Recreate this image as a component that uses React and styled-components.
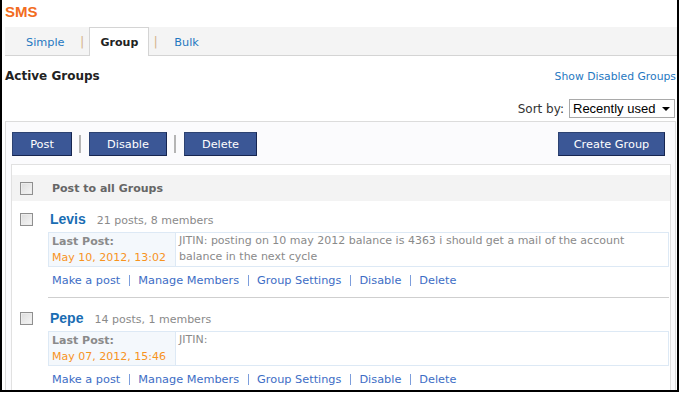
import React from "react";
import styled, { createGlobalStyle } from "styled-components";

const GlobalStyle = createGlobalStyle`
  html, body {
    margin: 0;
    padding: 0;
    background: #ffffff;
  }
  body {
    font-family: "DejaVu Sans", Verdana, sans-serif;
    font-size: 11px;
    color: #333;
  }
`;

const groups = [
  {
    name: "Levis",
    meta: "21 posts, 8 members",
    date: "May 10, 2012, 13:02",
    message:
      "JITIN: posting on 10 may 2012 balance is 4363 i should get a mail of the account balance in the next cycle",
  },
  {
    name: "Pepe",
    meta: "14 posts, 1 members",
    date: "May 07, 2012, 15:46",
    message: "JITIN:",
  },
];

const links = ["Make a post", "Manage Members", "Group Settings", "Disable", "Delete"];

export default function App() {
  return (
    <>
      <GlobalStyle />
      <Frame>
        <Brand>SMS</Brand>
        <TabBar>
          <Tab>Simple</Tab>
          <TabSep>|</TabSep>
          <Tab $active>Group</Tab>
          <TabSep>|</TabSep>
          <Tab>Bulk</Tab>
        </TabBar>

        <TitleRow>
          <Title>Active Groups</Title>
          <TopLink>Show Disabled Groups</TopLink>
        </TitleRow>

        <SortRow>
          <SortLabel>Sort by:</SortLabel>
          <Select>
            <span>Recently used</span>
            <Caret />
          </Select>
        </SortRow>

        <Panel>
          <Toolbar>
            <ButtonGroup>
              <Button $w={60}>Post</Button>
              <BtnSep />
              <Button $w={78}>Disable</Button>
              <BtnSep />
              <Button $w={73}>Delete</Button>
            </ButtonGroup>
            <Button $w={107}>Create Group</Button>
          </Toolbar>

          <ListBox>
            <ListHeader>
              <Check />
              <HeaderLabel>Post to all Groups</HeaderLabel>
            </ListHeader>

            {groups.map((g) => (
              <Item key={g.name}>
                <Check />
                <ItemBody>
                  <NameRow>
                    <GroupName>{g.name}</GroupName>
                    <Meta>{g.meta}</Meta>
                  </NameRow>
                  <LastPost>
                    <LastPostInfo>
                      <LastLabel>Last Post:</LastLabel>
                      <LastDate>{g.date}</LastDate>
                    </LastPostInfo>
                    <Message>{g.message}</Message>
                  </LastPost>
                  <Actions>
                    {links.map((l, i) => (
                      <React.Fragment key={l}>
                        {i > 0 && <ActionSep />}
                        <ActionLink>{l}</ActionLink>
                      </React.Fragment>
                    ))}
                  </Actions>
                </ItemBody>
              </Item>
            ))}
          </ListBox>
        </Panel>
      </Frame>
    </>
  );
}

const Frame = styled.div`
  width: 679px;
  height: 392px;
  box-sizing: border-box;
  border-left: 2px solid #000;
  border-right: 2px solid #000;
  border-bottom: 2px solid #000;
  padding-left: 3px;
  overflow: hidden;
`;

const Brand = styled.div`
  height: 27px;
  padding-top: 3px;
  box-sizing: border-box;
  font-family: "Liberation Sans", Arial, sans-serif;
  font-size: 15px;
  font-weight: bold;
  color: #f26c21;
  line-height: 17px;
`;

const TabBar = styled.div`
  display: flex;
  align-items: stretch;
  height: 28px;
  padding-left: 9px;
  background: #f4f4f4;
  border-bottom: 1px solid #d4d4d4;
`;

const Tab = styled.div`
  display: flex;
  align-items: center;
  padding: 0 10px 0 11px;
  margin-bottom: -1px;
  font-size: ${(p) => (p.$active ? "11px" : "11.3px")};
  color: ${(p) => (p.$active ? "#222" : "#1f78c1")};
  font-weight: ${(p) => (p.$active ? "bold" : "normal")};
  background: ${(p) => (p.$active ? "#fff" : "transparent")};
  border: 1px solid ${(p) => (p.$active ? "#d4d4d4" : "transparent")};
  border-bottom: none;
`;

const TabSep = styled.div`
  display: flex;
  align-items: center;
  justify-content: center;
  width: 13px;
  color: #d6b590;
  font-size: 13px;
`;

const TitleRow = styled.div`
  display: flex;
  justify-content: space-between;
  align-items: baseline;
  height: 27px;
  box-sizing: border-box;
  padding-top: 11px;
  line-height: 16px;
  padding-right: 1px;
`;

const Title = styled.div`
  font-size: 12px;
  font-weight: bold;
  color: #222;
`;

const TopLink = styled.a`
  color: #1f78c1;
  font-size: 10.8px;
  margin-top: 2px;
`;

const SortRow = styled.div`
  display: flex;
  justify-content: flex-end;
  align-items: center;
  gap: 5px;
  height: 19px;
  margin-top: 16px;
  margin-bottom: 3px;
  padding-right: 2px;
`;

const SortLabel = styled.span`
  font-size: 12px;
  color: #333;
`;

const Select = styled.div`
  display: flex;
  align-items: center;
  justify-content: space-between;
  width: 106px;
  height: 19px;
  box-sizing: border-box;
  padding: 0 4px 0 3px;
  border: 1px solid #a9a9a9;
  background: #fff;
  font-family: "Liberation Sans", Arial, sans-serif;
  font-size: 13px;
  color: #000;
`;

const Caret = styled.span`
  width: 0;
  height: 0;
  border-left: 4px solid transparent;
  border-right: 4px solid transparent;
  border-top: 4px solid #000;
`;

const Panel = styled.div`
  margin-right: 1px;
  height: 300px;
  border: 1px solid #dcdcdc;
  background: #fbfbfd;
  padding: 10px 4px 0 5px;
`;

const Toolbar = styled.div`
  display: flex;
  justify-content: space-between;
  align-items: center;
  padding: 0 6px 0 1px;
`;

const ButtonGroup = styled.div`
  display: flex;
  align-items: center;
`;

const Button = styled.button`
  width: ${(p) => p.$w}px;
  height: 24px;
  box-sizing: border-box;
  background: #3b5796;
  border: 1px solid #2c4272;
  border-right-color: #162550;
  border-bottom-color: #162550;
  color: #fff;
  font-family: "DejaVu Sans", Verdana, sans-serif;
  font-size: 11.3px;
  padding: 0;
  cursor: pointer;
`;

const BtnSep = styled.span`
  width: 2px;
  height: 18px;
  margin: 0 8px 0 7px;
  background: #b5b5b5;
`;

const ListBox = styled.div`
  margin-top: 8px;
  border: 1px solid #e1e1e1;
  background: #fff;
  padding-top: 10px;
`;

const ListHeader = styled.div`
  display: flex;
  align-items: center;
  height: 26px;
  padding-left: 8px;
  background: #f3f3f3;
`;

const Check = styled.span`
  flex: none;
  width: 13px;
  height: 13px;
  box-sizing: border-box;
  border: 1px solid #8f8f8f;
  background: linear-gradient(135deg, #dcdcdc 0%, #f6f6f6 100%);
  box-shadow: inset 0 0 0 1px #ececec;
`;

const HeaderLabel = styled.span`
  margin-left: 19px;
  font-weight: bold;
  color: #666;
  font-size: 11px;
`;

const Item = styled.div`
  display: flex;
  align-items: flex-start;
  padding: 10px 1px 0 8px;

  & + & {
    padding-top: 12px;
  }

  & > ${Check} {
    margin-top: 2px;
  }
`;

const ItemBody = styled.div`
  flex: 1;
  margin-left: 15px;
  padding-bottom: 7px;
  border-bottom: 1px solid #cfcfcf;
`;

const NameRow = styled.div`
  display: flex;
  align-items: baseline;
  gap: 11px;
  height: 19px;
  padding-left: 2px;
  margin-bottom: 2px;
`;

const GroupName = styled.span`
  font-family: "Liberation Sans", Arial, sans-serif;
  font-size: 14px;
  font-weight: bold;
  color: #1a6db3;
`;

const Meta = styled.span`
  color: #8a8a8a;
  font-size: 11px;
`;

const LastPost = styled.div`
  display: flex;
  border: 1px solid #dde9f5;
  background: #f4f8fc;
  min-height: 33px;
`;

const LastPostInfo = styled.div`
  flex: none;
  width: 127px;
  box-sizing: border-box;
  padding: 1px 0 0 3px;
  border-right: 1px solid #dde9f5;
  line-height: 16px;
`;

const LastLabel = styled.div`
  font-weight: bold;
  color: #8a8a8a;
`;

const LastDate = styled.div`
  color: #f7931e;
`;

const Message = styled.div`
  flex: 1;
  padding: 0 8px 0 3px;
  line-height: 16px;
  color: #8a8a8a;
  background: #fff;
`;

const Actions = styled.div`
  display: flex;
  align-items: center;
  height: 20px;
  padding-left: 4px;
  margin-top: 3px;
`;

const ActionLink = styled.a`
  color: #3d6dc5;
  font-size: 11.3px;
`;

const ActionSep = styled.span`
  width: 1px;
  height: 11px;
  margin: 0 8px 0 9px;
  background: #7d9edc;
`;
